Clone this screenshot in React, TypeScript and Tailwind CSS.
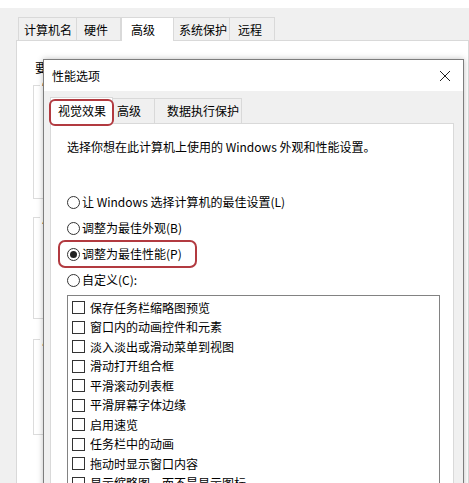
import React from "react";

const outerTabs = [
  { label: "计算机名", w: "w-[59px]", pl: "pl-[5px]" },
  { label: "硬件", w: "w-[45px]", pl: "pl-[7px]" },
  { label: "高级", w: "w-[53px]", pl: "pl-[9px]", active: true },
  { label: "系统保护", w: "w-[57px]", pl: "pl-[5px]" },
  { label: "远程", w: "w-[46px]", pl: "pl-[8px]" },
];

const radios = [
  { label: "让 Windows 选择计算机的最佳设置(L)" },
  { label: "调整为最佳外观(B)" },
  { label: "调整为最佳性能(P)", checked: true, marked: true },
  { label: "自定义(C):" },
];

const effects = [
  "保存任务栏缩略图预览",
  "窗口内的动画控件和元素",
  "淡入淡出或滑动菜单到视图",
  "滑动打开组合框",
  "平滑滚动列表框",
  "平滑屏幕字体边缘",
  "启用速览",
  "任务栏中的动画",
  "拖动时显示窗口内容",
  "显示缩略图，而不是显示图标",
];

const Radio = ({ checked }: { checked?: boolean }) => (
  <span className="w-[13px] h-[13px] rounded-full border border-[#333] bg-white flex items-center justify-center mr-[2px]">
    {checked && <span className="w-[7px] h-[7px] rounded-full bg-[#222]" />}
  </span>
);

const App = () => {
  return (
    <div className="relative w-[469px] h-[483px] overflow-hidden bg-[#f0f0f0] text-[12px] leading-[16px] text-black font-['Noto_Sans_CJK_SC',sans-serif]">
      {/* ------------------------ OUTER WINDOW ----------------------- */}
      <div className="h-[8px] bg-white" />
      <div className="flex items-end pl-[18px] pt-[9px]">
        {outerTabs.map((t) =>
          t.active ? (
            <div
              key={t.label}
              className={`${t.w} ${t.pl} h-[24px] pt-[4px] bg-white border border-[#d9d9d9] border-b-0 -mb-px relative z-10`}>
              {t.label}
            </div>
          ) : (
            <div
              key={t.label}
              className={`${t.w} ${t.pl} h-[23px] pt-[4px] bg-[#f0f0f0] border border-[#d9d9d9] border-b-0 -ml-px first:ml-0`}>
              {t.label}
            </div>
          )
        )}
      </div>
      <div className="ml-[16px] h-[460px] bg-white border border-[#d9d9d9]">
        {/* only the strip left of the options dialog is visible */}
        <div className="w-[27px] h-full overflow-hidden">
          <div className="pl-[18px] pt-[19px] h-[16px] box-content overflow-hidden">要</div>
          <div className="ml-[16px] mt-[9px] h-[114px] border-l border-t border-b border-[#dcdcdc] relative">
            <span className="absolute -top-[8px] left-[6px] bg-white px-[2px]">性</span>
          </div>
          <div className="ml-[16px] mt-[18px] h-[102px] border-l border-t border-b border-[#dcdcdc] relative">
            <span className="absolute -top-[8px] left-[6px] bg-white px-[2px]">用</span>
          </div>
          <div className="ml-[16px] mt-[20px] h-[96px] border-l border-t border-b border-[#dcdcdc] relative">
            <span className="absolute -top-[8px] left-[6px] bg-white px-[2px]">启</span>
          </div>
        </div>
      </div>

      {/* ------------------------ PERFORMANCE OPTIONS ----------------------- */}
      <div className="absolute left-[43px] top-[59px] w-[421px] h-[440px] border border-[#7d7d7d] bg-[#f0f0f0] shadow-[0_0_6px_rgba(0,0,0,0.25)] z-20">
        <div className="h-[31px] bg-white flex items-center justify-between pl-[8px] pr-[10px]">
          <span>性能选项</span>
          <svg width="12" height="12" viewBox="0 0 12 12" className="mr-[2px]">
            <path d="M1 1 L11 11 M11 1 L1 11" stroke="#222" strokeWidth="1" fill="none" />
          </svg>
        </div>
        <div className="pl-[6px] pr-[9px] pt-[5px]">
          <div className="flex items-end h-[27px]">
            <div className="relative w-[63px] h-[27px] pl-[7px] pt-[5px] bg-white border border-[#d9d9d9] border-b-0 -mb-px z-10">
              视觉效果
              <span className="absolute -left-[2px] -right-[2px] top-[1px] -bottom-[2px] border-2 border-[#b23a40] rounded-[6px]" />
            </div>
            <div className="w-[42px] h-[25px] pl-[4px] pt-[4px] border border-[#d9d9d9] border-b-0 border-l-0">高级</div>
            <div className="w-[87px] h-[25px] pl-[12px] pt-[4px] border border-[#d9d9d9] border-b-0 border-l-0">数据执行保护</div>
          </div>
          <div className="h-[380px] bg-white border border-[#d9d9d9] pl-[16px] pt-[15px]">
            <div className="whitespace-nowrap">选择你想在此计算机上使用的 Windows 外观和性能设置。</div>
            <div className="mt-[34px] flex flex-col">
              {radios.map((r) => (
                <div key={r.label} className="relative h-[26px] flex items-center whitespace-nowrap">
                  <Radio checked={r.checked} />
                  <span>{r.label}</span>
                  {r.marked && (
                    <span className="absolute -left-[9px] w-[139px] top-[-1px] bottom-[-1px] border-2 border-[#b23a40] rounded-[7px]" />
                  )}
                </div>
              ))}
            </div>
            <div className="mt-[2px] w-[373px] h-[200px] border border-[#828282] pl-[4px] pt-[2px]">
              {effects.map((e) => (
                <div key={e} className="h-[19.5px] flex items-center whitespace-nowrap">
                  <span className="w-[13px] h-[13px] border border-[#333] bg-white mr-[5px]" />
                  <span>{e}</span>
                </div>
              ))}
            </div>
          </div>
        </div>
      </div>
    </div>
  );
};

export default App;
